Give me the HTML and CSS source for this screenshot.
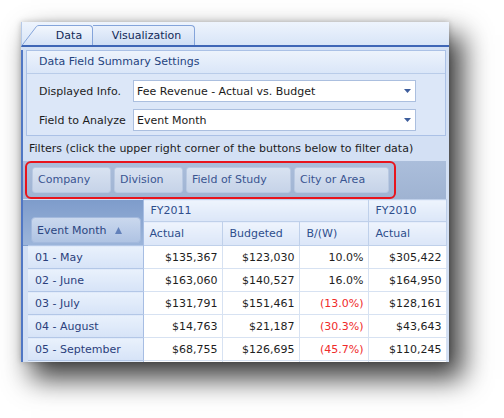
FILE: index.html
```html
<!DOCTYPE html>
<html>
<head>
<meta charset="utf-8">
<link rel="stylesheet" href="styles.css">
</head>
<body>
<div class="stage">
<div class="win">
  <div class="tabs">
    <svg class="slant" width="18" height="20" viewBox="0 0 18 20">
      <defs><linearGradient id="tg" x1="0" y1="0" x2="0" y2="1"><stop offset="0" stop-color="#f3f7fd"/><stop offset="1" stop-color="#d5e2f6"/></linearGradient></defs>
      <path d="M0 20 L14.5 1.4 Q15.5 0.5 17 0.5 L18 0.5 L18 20 Z" fill="url(#tg)"/>
      <path d="M0.3 20 L14.5 1.4 Q15.5 0.5 17 0.5 L18 0.5" fill="none" stroke="#84a4da"/>
    </svg>
    <div class="tab sel">Data</div>
    <div class="tab">Visualization</div>
  </div>
  <div class="content">
    <div class="group">
      <div class="ghead">Data Field Summary Settings</div>
      <div class="gbody">
        <div class="frow">
          <span class="lbl">Displayed Info.</span>
          <div class="combo"><span>Fee Revenue - Actual vs. Budget</span><svg width="7" height="4" viewBox="0 0 7 4"><path d="M0 0H7L3.5 4Z" fill="#3d5d9c"/></svg></div>
        </div>
        <div class="frow">
          <span class="lbl">Field to Analyze</span>
          <div class="combo"><span>Event Month</span><svg width="7" height="4" viewBox="0 0 7 4"><path d="M0 0H7L3.5 4Z" fill="#3d5d9c"/></svg></div>
        </div>
      </div>
    </div>
    <div class="flabel">Filters (click the upper right corner of the buttons below to filter data)</div>
    <div class="farea">
      <div class="fbox">
        <div class="fbtn w1">Company</div>
        <div class="fbtn w2">Division</div>
        <div class="fbtn w3">Field of Study</div>
        <div class="fbtn w4">City or Area</div>
      </div>
    </div>
    <table class="grid">
      <colgroup><col class="c-ind"><col class="c-rh"><col class="c-a"><col class="c-b"><col class="c-w"><col class="c-a2"></colgroup>
      <thead>
        <tr class="r1">
          <th class="corner" colspan="2" rowspan="2"><div class="sortbtn"><span>Event Month</span><svg width="7" height="7" viewBox="0 0 7 7"><path d="M3.5 0L7 7H0Z" fill="#6381ba"/></svg></div></th>
          <th class="grp" colspan="3">FY2011</th>
          <th class="grp">FY2010</th>
        </tr>
        <tr class="r2">
          <th class="ch first">Actual</th>
          <th class="ch">Budgeted</th>
          <th class="ch">B/(W)</th>
          <th class="ch">Actual</th>
        </tr>
      </thead>
      <tbody>
        <tr><td class="ind"></td><th class="rh">01 - May</th><td>$135,367</td><td>$123,030</td><td>10.0%</td><td>$305,422</td></tr>
        <tr><td class="ind"></td><th class="rh">02 - June</th><td>$163,060</td><td>$140,527</td><td>16.0%</td><td>$164,950</td></tr>
        <tr><td class="ind"></td><th class="rh">03 - July</th><td>$131,791</td><td>$151,461</td><td class="neg">(13.0%)</td><td>$128,161</td></tr>
        <tr><td class="ind"></td><th class="rh">04 - August</th><td>$14,763</td><td>$21,187</td><td class="neg">(30.3%)</td><td>$43,643</td></tr>
        <tr><td class="ind"></td><th class="rh">05 - September</th><td>$68,755</td><td>$126,695</td><td class="neg">(45.7%)</td><td>$110,245</td></tr>
        <tr><td class="ind"></td><th class="rh"></th><td></td><td></td><td></td><td></td></tr>
      </tbody>
    </table>
  </div>
</div>
</div>
</body>
</html>
```
FILE: styles.css
```css
html,
body {
  margin: 0;
  height: 100%;
  background: #ffffff;
  font-family: "DejaVu Sans", sans-serif;
  font-size: 11px;
}

.stage {
  padding: 22px 0 0 21px;
}

.win {
  width: 428px;
  height: 340px;
  overflow: hidden;
  background: #d3e0f4;
  box-shadow: 12px 15px 26px 2px rgba(0, 0, 0, 0.75), 0 0 6px rgba(0, 0, 0, 0.22);
}

.tabs {
  height: 25px;
  box-sizing: border-box;
  display: flex;
  align-items: flex-end;
  background: linear-gradient(#eef4fd, #d8e5f7);
  border-left: 1px solid #b5c9e8;
  border-bottom: 2px solid #3f66b6;
}

.slant {
  display: block;
}

.tab {
  height: 20px;
  box-sizing: border-box;
  line-height: 19px;
  background: linear-gradient(#f3f7fd, #d5e2f6);
  border-top: 1px solid #84a4da;
  border-right: 1px solid #84a4da;
  border-top-right-radius: 4px;
  color: #122a58;
  text-align: center;
  padding-left: 6px;
}

.tab.sel {
  width: 53px;
}

.tab:not(.sel) {
  width: 102px;
  background: linear-gradient(#eaf1fc, #cfdef4);
}

.content {
  border-left: 2px solid #5077c4;
  height: 315px;
}

.group {
  margin: 3px 3px 0 3px;
  border: 1px solid #abc1e6;
  background: #dce7f8;
}

.ghead {
  height: 22px;
  line-height: 22px;
  padding-left: 12px;
  color: #25447f;
  background: linear-gradient(#edf3fc, #dae6f8);
  border-bottom: 1px solid #b9cce9;
}

.gbody {
  padding: 6px 0 4px 12px;
  display: flex;
  flex-direction: column;
  gap: 7px;
}

.frow {
  display: flex;
  align-items: center;
  height: 22px;
}

.lbl {
  width: 94px;
  color: #1c1c1c;
}

.combo {
  width: 283px;
  height: 22px;
  box-sizing: border-box;
  border: 1px solid #abbfdf;
  background: #ffffff;
  display: flex;
  align-items: center;
  justify-content: space-between;
  padding: 0 4px 0 3px;
  color: #1a1a1a;
}

.flabel {
  height: 25px;
  line-height: 25px;
  padding-left: 6px;
  color: #1c1c1c;
  white-space: nowrap;
}

.farea {
  height: 38px;
  margin-right: 3px;
  padding-left: 2px;
  background: linear-gradient(#abbedb, #9fb3d2);
  display: flex;
}

.fbox {
  display: flex;
  gap: 3px;
  border: 2px solid #e8141c;
  border-radius: 6px;
  padding: 4px 5px;
}

.fbtn {
  height: 26px;
  box-sizing: border-box;
  border: 1px solid #b9c9e2;
  border-radius: 3px;
  background: linear-gradient(#d8e2f1, #c6d3e8);
  color: #3a5591;
  padding-left: 5px;
  line-height: 24px;
  white-space: nowrap;
}

.w1 { width: 79px; }
.w2 { width: 69px; }
.w3 { width: 105px; }
.w4 { width: 95px; }

.grid {
  width: 423px;
  table-layout: fixed;
  border-collapse: collapse;
}

.c-ind { width: 5px; }
.c-rh { width: 115px; }
.c-a { width: 79px; }
.c-b { width: 77px; }
.c-w { width: 69px; }
.c-a2 { width: 78px; }

.grid th {
  font-weight: normal;
  padding: 0;
  white-space: nowrap;
}

.corner {
  background: linear-gradient(#7e9ccb, #9cb5da);
  vertical-align: bottom;
  padding: 0 2px 2px 8px !important;
  border-right: 1px solid #a6bde3;
}

.sortbtn {
  height: 26px;
  box-sizing: border-box;
  border: 1px solid #a3b9dd;
  border-radius: 4px;
  background: linear-gradient(#cad8ee, #afc3e3);
  color: #2b4580;
  display: flex;
  align-items: center;
  padding-left: 5px;
  gap: 8px;
}

.grp,
.ch {
  text-align: left;
  color: #2e4e8c;
  background: linear-gradient(#eef4fd, #dbe6f8);
  border: 1px solid #bfd0ea;
  padding-left: 7px !important;
}

.r1 th.grp { height: 21px; }
.r2 th.ch { height: 23px; }
.ch.first { padding-left: 6px !important; }

.grid td {
  height: 22px;
  padding: 0 4px 0 0;
  background: #ffffff;
  border: 1px solid #d7e2f2;
  text-align: right;
  color: #1e1e1e;
  white-space: nowrap;
}

.grid td.ind {
  background: #d3e0f4;
  border: none;
  padding: 0;
}

.grid td.neg {
  color: #f02a2a;
}

.grid th.rh {
  text-align: left;
  padding-left: 7px;
  background: linear-gradient(#e9f1fc, #d6e3f7);
  border-bottom: 1px solid #b3c7e7;
  border-top: 1px solid #b3c7e7;
  border-right: 1px solid #a6bde3;
  color: #2b3f7c;
}
```
